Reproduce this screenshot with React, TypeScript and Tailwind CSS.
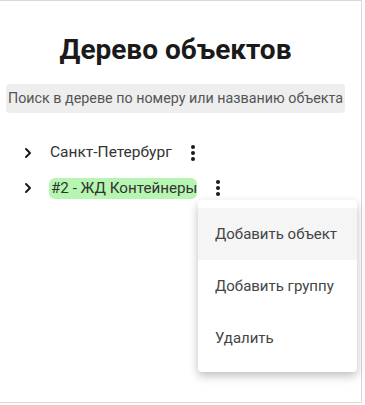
import { ChevronRight } from 'lucide-react'

function Dots() {
  return (
    <svg width="6" height="18" viewBox="0 0 6 18" className="shrink-0 text-[#1a1a1a]">
      <circle cx="3" cy="3" r="2" fill="currentColor" />
      <circle cx="3" cy="9" r="2" fill="currentColor" />
      <circle cx="3" cy="15" r="2" fill="currentColor" />
    </svg>
  )
}

const menuItems = ['Добавить объект', 'Добавить группу', 'Удалить']

export default function App() {
  return (
    <div className="relative h-[405px] w-[365px] bg-white font-['Roboto',sans-serif]">
      <div className="h-[403px] w-[362px] border-t border-r border-b border-[#d9d9d9]">
        <h1 className="mt-[31px] pr-[10px] text-center text-[28px] font-bold leading-[36px] text-[#1a1a1a]">
          Дерево объектов
        </h1>
        <div className="mx-[6px] mt-[16px] flex h-[29px] w-[339px] items-center rounded-[4px] bg-[#eeeeee] px-[2px]">
          <span className="whitespace-nowrap text-[14.3px] text-[#555]">
            Поиск в дереве по номеру или названию объекта
          </span>
        </div>
        <ul className="mt-[29px] flex flex-col gap-[13px] pl-[20px]">
          <li className="flex h-[22px] items-center">
            <ChevronRight className="h-[16px] w-[16px] text-[#1a1a1a]" strokeWidth={3} />
            <span className="ml-[14px] text-[15.5px] text-[#333]">Санкт-Петербург</span>
            <span className="ml-[18px]"><Dots /></span>
          </li>
          <li className="flex h-[22px] items-center">
            <ChevronRight className="h-[16px] w-[16px] text-[#1a1a1a]" strokeWidth={3} />
            <span className="ml-[13px] rounded-[6px] bg-[#b7f5b2] pl-[2px] text-[15.2px] leading-[21px] text-[#333]">
              #2 - ЖД Контейнеры
            </span>
            <span className="ml-[18px]"><Dots /></span>
          </li>
        </ul>
      </div>
      <div className="absolute left-[198px] top-[200px] w-[159px] rounded-[4px] bg-white py-[8px] shadow-[0_4px_10px_rgba(0,0,0,0.25)]">
        {menuItems.map((item, i) => (
          <div
            key={item}
            className={
              'flex h-[52px] items-center px-[17px] text-[15px] text-[#444] ' +
              (i === 0 ? 'bg-[#f5f5f5]' : '')
            }
          >
            {item}
          </div>
        ))}
      </div>
    </div>
  )
}
